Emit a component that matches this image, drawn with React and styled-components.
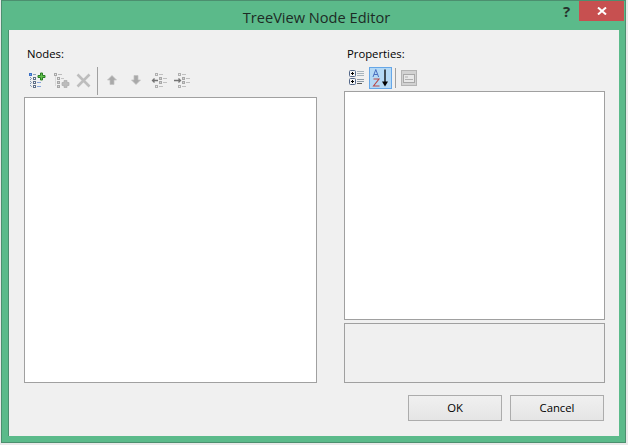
import styled, { createGlobalStyle } from "styled-components";

const GlobalStyle = createGlobalStyle`
  html, body {
    margin: 0;
    padding: 0;
    background: #e9e9e9;
  }
  body {
    font-family: "Open Sans", "Noto Sans", sans-serif;
  }
`;

const Screen = styled.div`
  width: 628px;
  height: 445px;
  padding: 0 2px 2px 1px;
  box-sizing: border-box;
  overflow: hidden;
`;
const Win = styled.div`
  height: 100%;
  box-sizing: border-box;
  display: flex;
  flex-direction: column;
  background: #5bba8a;
  border: 1px solid #4c8f6f;
  padding: 0 6px 6px 6px;
`;
const TitleBar = styled.div`
  height: 29px;
  flex: none;
  display: flex;
  align-items: center;
  justify-content: center;
  position: relative;
  font-size: 14.6px;
  color: #1d2b25;
  padding: 2px 0 0 6px;
  box-sizing: border-box;
`;
const HelpBtn = styled.div`
  position: absolute;
  left: 555px;
  top: 0;
  font-size: 15px;
  font-weight: 700;
  color: #26332d;
  line-height: 20px;
`;
const CloseBtn = styled.div`
  position: absolute;
  right: -5px;
  top: 0;
  width: 45px;
  height: 20px;
  background: #c75050;
  display: flex;
  align-items: center;
  justify-content: center;
`;
const Client = styled.div`
  flex: 1;
  background: #f0f0f0;
  display: grid;
  grid-template-columns: 293px 261px;
  grid-template-rows: 1fr auto;
  column-gap: 27px;
  padding: 16px 18px 15px 15px;
  border-left: 1px solid #4c8f6f;
  box-sizing: border-box;
  min-height: 0;
`;
const Column = styled.div`
  display: flex;
  flex-direction: column;
  min-height: 0;
`;
const Label = styled.div`
  font-size: 11.3px;
  line-height: 16px;
  color: #000;
  margin-left: 3px;
`;
const Toolbar = styled.div`
  display: flex;
  align-items: center;
  height: ${(p) => p.$h}px;
  margin-top: 5px;
  margin-bottom: 2px;
  flex: none;
`;
const ToolBtn = styled.div`
  width: ${(p) => p.$w || 23}px;
  height: 22px;
  margin-bottom: ${(p) => p.$lift || 0}px;
  display: flex;
  align-items: center;
  justify-content: center;
  box-sizing: border-box;
  ${(p) => p.$active && "background: #b5d9f5; border: 1px solid #66a7e8;"}
`;
const Sep = styled.div`
  width: 1px;
  height: ${(p) => p.$h}px;
  background: #a0a0a0;
  margin: 0 2px 0 3px;
  flex: none;
`;
const ListBox = styled.div`
  flex: 1;
  background: #fff;
  border: 1px solid #a0a0a0;
  box-sizing: border-box;
`;
const HelpPane = styled.div`
  height: 60px;
  flex: none;
  margin-top: 3px;
  background: #f0f0f0;
  border: 1px solid #a0a0a0;
  box-sizing: border-box;
`;
const Footer = styled.div`
  grid-column: 1 / 3;
  display: flex;
  justify-content: flex-end;
  gap: 8px;
  margin-top: 12px;
  margin-right: 1px;
`;
const Button = styled.button`
  width: 94px;
  height: 26px;
  box-sizing: border-box;
  border: 1px solid #acacac;
  background: linear-gradient(#f0f0f0, #e5e5e5);
  font-family: inherit;
  font-size: 11.3px;
  color: #000;
  padding: 0 0 2px 0;
`;

const AddRootIcon = () => (
  <svg width="18" height="18" viewBox="0 0 18 18">
    <rect x="1.500" y="2.500" width="2" height="2" fill="#6ea4ec" stroke="#3b6fc4" />
    <path d="M5 3.500h3" stroke="#8fa2b8" />
    <path d="M2.500 6v10" stroke="#7f93b0" strokeDasharray="1 1" />
    <path d="M3 7.500h2M3 11.500h2M3 15.500h2" stroke="#9aa8bc" strokeDasharray="1 1" />
    <rect x="5.500" y="6.500" width="2" height="2" fill="#fff" stroke="#5f6f86" />
    <rect x="5.500" y="10.500" width="2" height="2" fill="#fff" stroke="#5f6f86" />
    <rect x="5.500" y="14.500" width="2" height="2" fill="#fff" stroke="#5f6f86" />
    <path d="M9 11.500h4M9 15.500h4" stroke="#86a4d8" />
    <path d="M12.500 2h2v2.500h2.500v2h-2.500v2.500h-2v-2.500h-2.500v-2h2.500z" fill="#62c24c" stroke="#2a7d24" />
  </svg>
);
const AddChildIcon = () => (
  <svg width="18" height="18" viewBox="0 0 18 18">
    <rect x="2.500" y="2.500" width="2" height="2" fill="#e8e8e8" stroke="#a8a8a8" />
    <path d="M6 3.500h4" stroke="#bcbcbc" />
    <path d="M3.500 5.500v10" stroke="#c6c6c6" strokeDasharray="1 1" />
    <rect x="5.500" y="6.500" width="2" height="2" fill="#e8e8e8" stroke="#a8a8a8" />
    <rect x="5.500" y="10.500" width="2" height="2" fill="#cfcfcf" stroke="#a8a8a8" />
    <rect x="5.500" y="14.500" width="2" height="2" fill="#cfcfcf" stroke="#a8a8a8" />
    <path d="M9 7.500h3" stroke="#c4c4c4" />
    <path d="M12 9.500h3v2h2v3h-2v2h-3v-2h-2v-3h2z" fill="#bcbcbc" stroke="#acacac" strokeWidth="0.700" />
  </svg>
);
const DeleteIcon = () => (
  <svg width="15" height="15" viewBox="0 0 15 15">
    <path d="M1.500 1.500l12 12M13.500 1.500l-12 12" stroke="#bdbdbd" strokeWidth="2.600" />
  </svg>
);
const UpIcon = () => (
  <svg width="10" height="10" viewBox="0 0 10 10">
    <path d="M5 0.500L9.500 5H7v4.500H3V5H0.500z" fill="#a9a9a9" stroke="#c0c0c0" strokeWidth="0.700" />
  </svg>
);
const DownIcon = () => (
  <svg width="10" height="10" viewBox="0 0 10 10">
    <path d="M5 9.500L9.500 5H7V0.500H3V5H0.500z" fill="#a9a9a9" stroke="#c0c0c0" strokeWidth="0.700" />
  </svg>
);
const TreeLines = ({ x }) => (
  <g transform={`translate(${x} 0)`}>
    <rect x="0.500" y="2.500" width="2" height="2" fill="#ececec" stroke="#b0b0b0" />
    <rect x="4.500" y="6.500" width="2" height="2" fill="#cfcfcf" stroke="#a8a8a8" />
    <rect x="4.500" y="10.500" width="2" height="2" fill="#cfcfcf" stroke="#a8a8a8" />
    <rect x="0.500" y="14.500" width="2" height="2" fill="#ececec" stroke="#b0b0b0" />
    <path d="M4 3.500h4M8 7.500h4M8 11.500h4M4 15.500h4" stroke="#c0c0c0" />
  </g>
);
const OutdentIcon = () => (
  <svg width="18" height="18" viewBox="0 0 18 18">
    <TreeLines x={4} />
    <path d="M7 9.500H2M3.500 7.500L1.500 9.500l2 2" stroke="#747474" strokeWidth="1.300" fill="none" />
  </svg>
);
const IndentIcon = () => (
  <svg width="18" height="18" viewBox="0 0 18 18">
    <TreeLines x={4} />
    <path d="M0 9.500h6M4.500 7.500l2 2-2 2" stroke="#747474" strokeWidth="1.300" fill="none" />
  </svg>
);
const CategorizedIcon = () => (
  <svg width="18" height="18" viewBox="0 0 18 18">
    <rect x="1.500" y="1.500" width="6" height="6" rx="1" fill="#f4f4f4" stroke="#54688a" />
    <rect x="1.500" y="9.500" width="6" height="6" rx="1" fill="#f4f4f4" stroke="#54688a" />
    <path d="M3 4.500h3M4.500 3v3M3 12.500h3M4.500 11v3" stroke="#000" />
    <path d="M9 2.500h7M9 4.500h7M9 6.500h7" stroke="#a8b4bc" />
    <path d="M9 10.500h7M9 12.500h7" stroke="#8e9ca8" />
    <path d="M9 14.500h5" stroke="#5a5a5a" />
  </svg>
);
const AlphaIcon = () => (
  <svg width="20" height="20" viewBox="0 0 20 20">
    <path d="M2 9L4.800 1.500 7.600 9M3 6.500h3.600" stroke="#4a6fc0" strokeWidth="1" fill="none" />
    <path d="M2.500 11h5.500L2.500 18h6" stroke="#b84a4a" strokeWidth="1.100" fill="none" />
    <path d="M14 1.500v14" stroke="#000" strokeWidth="1.300" />
    <path d="M11 13.500h6l-3 5z" fill="#000" />
  </svg>
);
const PagesIcon = () => (
  <svg width="16" height="16" viewBox="0 0 16 16">
    <rect x="0.500" y="0.500" width="15" height="15" fill="#d2d2d2" stroke="#b4b4b4" />
    <rect x="2.500" y="4.500" width="11" height="8" fill="#e8e8e8" stroke="#a8a8a8" />
    <path d="M4 7h3M4 9.500h8" stroke="#b0b0b0" />
  </svg>
);
const CloseGlyph = () => (
  <svg width="10" height="8" viewBox="0 0 10 8">
    <path d="M1 0.500l8 7M9 0.500l-8 7" stroke="#fff" strokeWidth="2" />
  </svg>
);

const App = () => {
  return (
    <>
      <GlobalStyle />
      <Screen>
        <Win>
          <TitleBar>
            TreeView Node Editor
            <HelpBtn>?</HelpBtn>
            <CloseBtn>
              <CloseGlyph />
            </CloseBtn>
          </TitleBar>
          <Client>
            <Column>
              <Label>Nodes:</Label>
              <Toolbar $h={28}>
                <ToolBtn $w={26} $lift={2}>
                  <AddRootIcon />
                </ToolBtn>
                <ToolBtn $w={22} $lift={2}>
                  <AddChildIcon />
                </ToolBtn>
                <ToolBtn $w={22} $lift={2}>
                  <DeleteIcon />
                </ToolBtn>
                <Sep $h={28} />
                <ToolBtn $w={24} $lift={3}>
                  <UpIcon />
                </ToolBtn>
                <ToolBtn $w={24} $lift={3}>
                  <DownIcon />
                </ToolBtn>
                <ToolBtn $lift={2}>
                  <OutdentIcon />
                </ToolBtn>
                <ToolBtn $lift={2}>
                  <IndentIcon />
                </ToolBtn>
              </Toolbar>
              <ListBox />
            </Column>
            <Column>
              <Label>Properties:</Label>
              <Toolbar $h={22}>
                <ToolBtn $w={25}>
                  <CategorizedIcon />
                </ToolBtn>
                <ToolBtn $active>
                  <AlphaIcon />
                </ToolBtn>
                <Sep $h={20} />
                <ToolBtn $w={22}>
                  <PagesIcon />
                </ToolBtn>
              </Toolbar>
              <ListBox />
              <HelpPane />
            </Column>
            <Footer>
              <Button>OK</Button>
              <Button>Cancel</Button>
            </Footer>
          </Client>
        </Win>
      </Screen>
    </>
  );
};
export default App;
